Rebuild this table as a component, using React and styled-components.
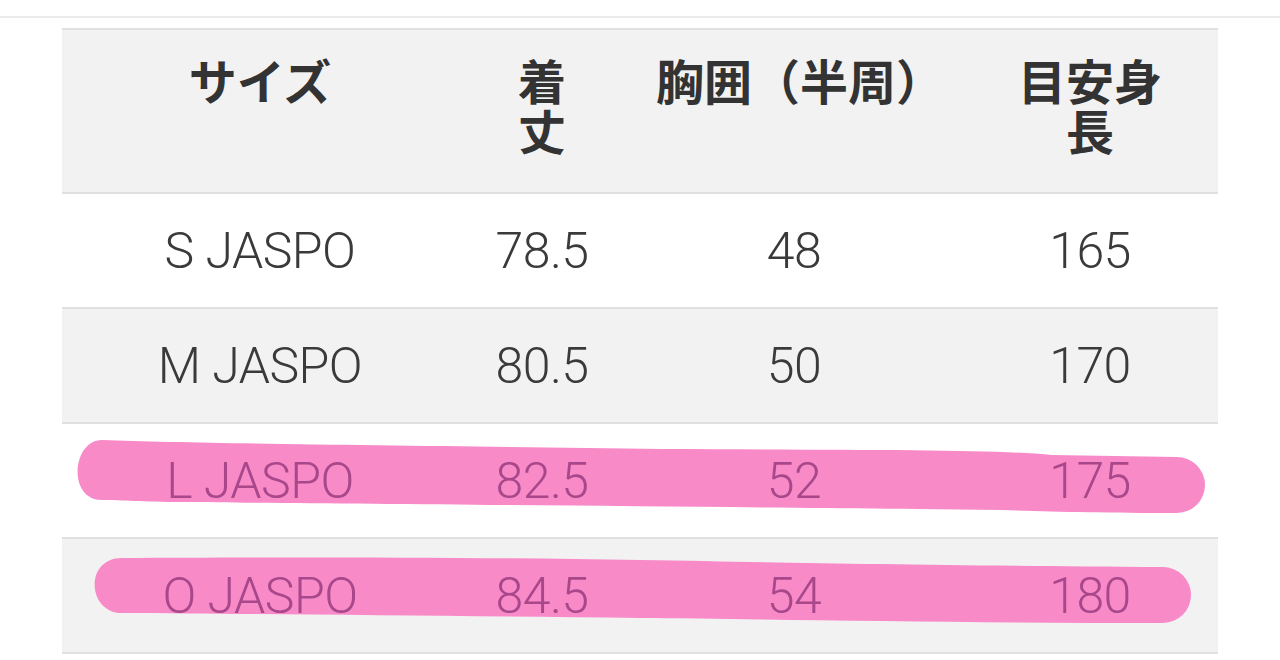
import React from "react";
import styled, { createGlobalStyle } from "styled-components";

const GlobalStyle = createGlobalStyle`
  body {
    margin: 0;
    background: #fff;
    font-family: "Noto Sans CJK JP", "Noto Sans", sans-serif;
  }
`;

const Page = styled.div`
  width: 1280px;
  height: 660px;
  overflow: hidden;
  padding-top: 16px;
  box-sizing: border-box;
`;

const Rule = styled.div`
  height: 2px;
  background: #ebebeb;
  margin-bottom: 10px;
`;

const Table = styled.div`
  margin-left: 62px;
  width: 1156px;
  border-top: 2px solid #e0e0e0;
`;

const cols = "396px 168px 336px 256px";

const HeadRow = styled.div`
  display: grid;
  grid-template-columns: ${cols};
  background: #f2f2f2;
  border-bottom: 2px solid #e0e0e0;
`;

const HeadCell = styled.div`
  padding: 24px 0 38px;
  padding-left: ${(p) => p.$shift || 0}px;
  text-align: center;
  font-family: "Noto Sans CJK JP", sans-serif;
  font-weight: 700;
  font-size: 48px;
  line-height: 50px;
  color: #333;
`;

const Row = styled.div`
  position: relative;
  display: grid;
  grid-template-columns: ${cols};
  height: 113px;
  background: ${(p) => (p.$shade ? "#f2f2f2" : "#fff")};
  border-bottom: 2px solid #e0e0e0;
`;

const Cell = styled.div`
  position: relative;
  z-index: 1;
  display: flex;
  align-items: center;
  justify-content: center;
  font-family: Roboto, "Liberation Sans", sans-serif;
  font-weight: 300;
  font-size: 50px;
  letter-spacing: -0.5px;
  color: ${(p) => (p.$marked ? "#a8478a" : "#3a3a3a")};
`;

const Marker = styled.svg`
  position: absolute;
  left: 0;
  top: 0;
  width: 1156px;
  height: 113px;
  overflow: visible;
  z-index: 0;
`;

const strokes = {
  L: "M 40 16 C 150 20 400 22 600 25 C 800 26 930 25 990 31 L 1115 33 A 28 28 0 0 1 1115 89 C 1040 89 990 88 940 86 C 700 83 300 80 120 78 C 80 78 60 76 40 76 C 5 76 10 16 40 16 Z",
  O: "M 60 19 C 200 18 400 18 578 21 C 750 24 850 26 1101 28 A 28 28 0 0 1 1101 84 C 900 84 700 80 578 79 C 400 77 200 75 60 74 C 25 74 22 19 60 19 Z",
};

const headers = [
  { lines: ["サイズ"] },
  { lines: ["着", "丈"] },
  { lines: ["胸囲（半周）"], shift: 12 },
  { lines: ["目安身", "長"] },
];

const rows = [
  { id: "S", cells: ["S JASPO", "78.5", "48", "165"] },
  { id: "M", cells: ["M JASPO", "80.5", "50", "170"] },
  { id: "L", cells: ["L JASPO", "82.5", "52", "175"] },
  { id: "O", cells: ["O JASPO", "84.5", "54", "180"] },
];

export default function App() {
  return (
    <Page>
      <GlobalStyle />
      <Rule />
      <Table>
        <HeadRow>
          {headers.map((h, i) => (
            <HeadCell key={i} $shift={h.shift}>
              {h.lines.map((l, j) => (
                <div key={j}>{l}</div>
              ))}
            </HeadCell>
          ))}
        </HeadRow>
        {rows.map((r, i) => {
          const marked = !!strokes[r.id];
          return (
            <Row key={r.id} $shade={i % 2 === 1}>
              {marked && (
                <Marker viewBox="0 0 1156 113">
                  <path d={strokes[r.id]} fill="#f88ac8" />
                </Marker>
              )}
              {r.cells.map((c, j) => (
                <Cell key={j} $marked={marked}>
                  {c}
                </Cell>
              ))}
            </Row>
          );
        })}
      </Table>
    </Page>
  );
}
